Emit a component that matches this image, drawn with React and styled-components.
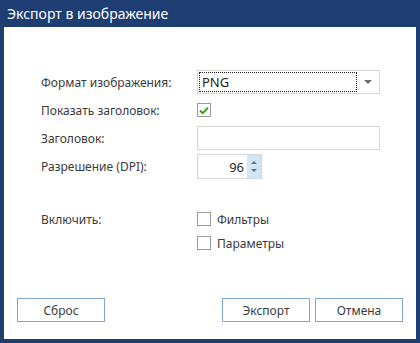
import styled, { createGlobalStyle } from 'styled-components';

const GlobalStyle = createGlobalStyle`
  html, body {
    margin: 0;
    padding: 0;
    background: #1e3d72;
  }
  body {
    font-family: 'Segoe UI', 'Noto Sans', 'Open Sans', sans-serif;
  }
`;

export default function App() {
  return (
    <>
      <GlobalStyle />
      <Window>
        <TitleBar>Экспорт в изображение</TitleBar>
        <Body>
          <Form>
            <Label>Формат изображения:</Label>
            <Select>
              <SelectValue>PNG</SelectValue>
              <SelectArrow />
            </Select>

            <Label>Показать заголовок:</Label>
            <Cell>
              <CheckBox checked>
                <CheckMark />
              </CheckBox>
            </Cell>

            <Label>Заголовок:</Label>
            <TextInput />

            <Label>Разрешение (DPI):</Label>
            <Cell>
              <Spinner>
                <SpinValue>96</SpinValue>
                <SpinButtons>
                  <SpinArrow up />
                  <SpinArrow />
                </SpinButtons>
              </Spinner>
            </Cell>
          </Form>

          <IncludeRow>
            <Label>Включить:</Label>
            <Options>
              <Option>
                <CheckBox />
                Фильтры
              </Option>
              <Option>
                <CheckBox />
                Параметры
              </Option>
            </Options>
          </IncludeRow>

          <Footer>
            <Button>Сброс</Button>
            <Spacer />
            <Button>Экспорт</Button>
            <Button>Отмена</Button>
          </Footer>
        </Body>
      </Window>
    </>
  );
}

function CheckMark() {
  return (
    <svg width="10" height="9" viewBox="0 0 10 9">
      <path d="M1 4.6 L3.8 7.2 L9 1.6" fill="none" stroke="#3f9a1c" strokeWidth="2" />
    </svg>
  );
}

const Window = styled.div`
  width: 420px;
  height: 343px;
  box-sizing: border-box;
  display: flex;
  flex-direction: column;
  background: #1e3d72;
  padding: 0 4px 4px 4px;
`;

const TitleBar = styled.div`
  height: 27px;
  display: flex;
  align-items: center;
  padding-left: 3px;
  padding-bottom: 1px;
  box-sizing: border-box;
  color: #ffffff;
  font-size: 14px;
`;

const Body = styled.div`
  flex: 1;
  background: #ffffff;
  display: flex;
  flex-direction: column;
  padding: 43px 13px 17px 13px;
  color: #3b3b3b;
  font-size: 12px;
`;

const Form = styled.div`
  display: grid;
  grid-template-columns: 156px 183px;
  grid-auto-rows: 24px;
  row-gap: 4px;
  padding-left: 24px;
  align-items: center;
`;

const Label = styled.div`
  font-size: 12px;
  color: #3b3b3b;
  white-space: nowrap;
`;

const Cell = styled.div`
  display: flex;
  align-items: center;
  height: 100%;
`;

const Select = styled.div`
  height: 24px;
  box-sizing: border-box;
  border: 1px solid #d6d6d6;
  display: flex;
  align-items: center;
  padding: 1px;
`;

const SelectValue = styled.div`
  flex: 1;
  height: 100%;
  box-sizing: border-box;
  border: 1px dotted #222;
  display: flex;
  align-items: center;
  padding-left: 2px;
  font-size: 13px;
  color: #2a1a1a;
  margin-right: 0;
  max-width: 158px;
`;

const SelectArrow = styled.div`
  margin-left: auto;
  margin-right: 6px;
  width: 0;
  height: 0;
  border-left: 4px solid transparent;
  border-right: 4px solid transparent;
  border-top: 4px solid #707070;
`;

const TextInput = styled.div`
  height: 24px;
  box-sizing: border-box;
  border: 1px solid #d6d6d6;
`;

const CheckBox = styled.div`
  width: 14px;
  height: 14px;
  box-sizing: border-box;
  border: 1px solid #9a9a9a;
  background: #ffffff;
  display: flex;
  align-items: center;
  justify-content: center;
  flex-shrink: 0;
`;

const Spinner = styled.div`
  width: 65px;
  height: 25px;
  box-sizing: border-box;
  border: 1px solid #d6d6d6;
  display: flex;
  margin-top: 1px;
`;

const SpinValue = styled.div`
  flex: 1;
  display: flex;
  align-items: center;
  justify-content: flex-end;
  padding-right: 3px;
  font-size: 13px;
  color: #2a2a2a;
`;

const SpinButtons = styled.div`
  width: 14px;
  background: #cfe5f8;
  display: flex;
  flex-direction: column;
  align-items: center;
  justify-content: space-evenly;
`;

const SpinArrow = styled.div`
  width: 0;
  height: 0;
  border-left: 3px solid transparent;
  border-right: 3px solid transparent;
  ${(props) =>
    props.up ? 'border-bottom: 3px solid #6d6d6d;' : 'border-top: 3px solid #6d6d6d;'}
`;

const IncludeRow = styled.div`
  display: grid;
  grid-template-columns: 156px 183px;
  padding-left: 24px;
  margin-top: 34px;
  align-items: start;

  & > ${Label} {
    margin-top: -1px;
  }
`;

const Options = styled.div`
  display: flex;
  flex-direction: column;
  gap: 10px;
`;

const Option = styled.div`
  display: flex;
  align-items: center;
  gap: 6px;
  height: 14px;
  font-size: 12px;
  color: #3b3b3b;
`;

const Footer = styled.div`
  margin-top: auto;
  display: flex;
  gap: 5px;
`;

const Spacer = styled.div`
  flex: 1;
`;

const Button = styled.button`
  width: 88px;
  height: 24px;
  box-sizing: border-box;
  border: 1px solid #7fa7d8;
  background: #ffffff;
  font-family: inherit;
  font-size: 12px;
  color: #3b3b3b;
  padding: 0;
`;
